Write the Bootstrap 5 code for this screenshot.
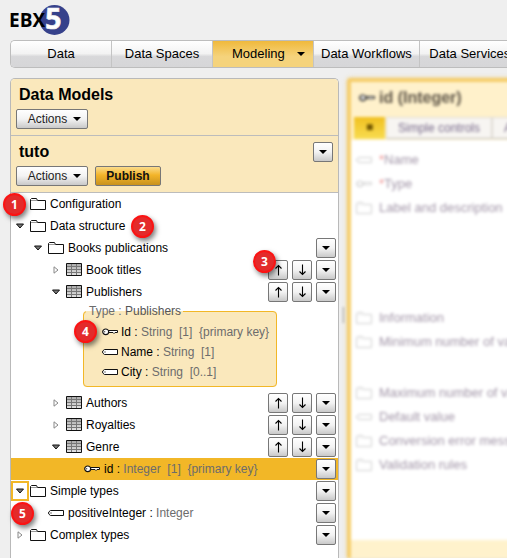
<!DOCTYPE html>
<html lang="en">
<head>
<meta charset="utf-8">
<meta name="viewport" content="width=device-width, initial-scale=1">
<title>EBX5 - Data Models</title>
<link href="https://cdn.jsdelivr.net/npm/bootstrap@5.3.0/dist/css/bootstrap.min.css" rel="stylesheet">
<style>
body{background:#efefef;font-family:"Liberation Sans",Arial,sans-serif;font-size:12px;line-height:16px;color:#000;overflow:hidden}
a{color:inherit;text-decoration:none}
svg{display:block;flex:none}
.brandbar{height:40px;padding:4px 0 0 10px}
.tabbar{margin-left:10px;border:1px solid #bdbdbd;border-right:0;border-radius:5px 0 0 5px;overflow:hidden;font-size:13px;height:28px}
.tabbar a{flex:none;min-width:101px;padding:0 7px;border-right:1px solid #c4c4c4;background:linear-gradient(#fff,#f3f3f3 48%,#d8d8da 60%,#d6d6d8);color:#000}
.tabbar a.current{background:linear-gradient(#f0b93c,#f5d37c 60%);padding-left:19px;gap:12px}
.workarea{margin-top:10px;padding-left:10px;min-height:480px;height:calc(100vh - 78px)}
.models{flex:0 0 329px;border:1px solid #b9b9b9;border-bottom:0;border-radius:5px 5px 0 0;background:#fff}
.pane-head{background:#fae8bc;border-bottom:1px solid #bcbcbc;padding:6px 5px;height:57px}
.pane-head:first-child{border-radius:4px 4px 0 0}
.pane-head h1,.pane-head h2{font-size:16px;line-height:20px;font-weight:700;margin:0 0 4px;padding-left:3px}
.tool{height:20px;border:1px solid #777;border-radius:2px;background:linear-gradient(#fff,#f3f3f3 50%,#c9c9c9);padding:0;color:#222;line-height:18px;font-size:12px;display:flex;align-items:center;justify-content:center}
.tool.sq{width:20px}
.tool.menu{width:72px;gap:6px;padding-left:5px}
.tool.go{width:66px;font-weight:700;background:linear-gradient(#fbdc8c,#f3b429 45%,#c8921e);color:#111;margin-left:7px}
.node{height:22px;padding-right:2px}
.twist{width:16px;height:18px;border:0;background:none;padding:0;display:flex;align-items:center;justify-content:center;margin:0 2px 0 1px}
.twist.focused{outline:2px solid #f2b727;outline-offset:-1px}
.lv0{padding-left:0}.lv1{padding-left:18px}.lv2{padding-left:36px}.lv3{padding-left:54px}
.leaf-icon{margin-left:19px}
.node .caption-text,.field-row .caption-text{margin-left:4px;white-space:pre}
.field-row .caption-text{margin-left:3px}
.dim{color:#6c6c6c}
.chosen{background:#f2b727}
.typebox{margin:0 0 5px 72px;width:194px;border:1px solid #f2b727;border-radius:4px;background:#fae8bc;padding:3px 0 4px 18px;min-width:0}
.typebox legend{float:none;width:auto;font-size:12px;line-height:16px;margin:0 0 0 -16px;padding:0 2px 0 3px;color:#555}
.field-row{height:20px}
.callout-dot{position:absolute;width:23px;height:23px;border-radius:50%;background:#e32b2b;border:2px solid #fb1313;color:#fff;font:bold 12px/19px "Open Sans",sans-serif;text-align:center;box-shadow:2px 3px 5px rgba(0,0,0,.5)}
.d1{left:-8px;top:114px}.d2{left:120px;top:136px}.d3{left:242px;top:171px}.d4{left:63px;top:241px}.d5{left:0;top:423px}
.grip{width:4px;height:16px;background:#cfcfcf;margin-top:229px;margin-left:3px;filter:blur(1px)}
.detail{border:4px solid #f5cd6a;border-right:0;border-bottom:0;border-radius:4px 0 0;background:#fff;filter:blur(1.4px);margin-left:2px;margin-right:-8px;overflow:hidden;font-size:13px;white-space:nowrap;box-shadow:0 0 4px #ead39a}
.detail-head{background:#fff1cb;height:58px;padding-top:5px}
.detail-head h2{font-size:16px;line-height:22px;font-weight:700;color:#5c5346;margin:0;padding-left:8px;gap:4px}
.detail-tabs{margin:8px 0 0 3px;height:22px;font-size:12px;color:#77698a}
.detail-tabs a{flex:none;background:#f7f5f2;border:1px solid #dedad3;border-bottom-color:#bbb;padding:0 11px;line-height:20px}
.detail-tabs a.on{background:linear-gradient(#f0c020,#f8dc50);width:31px;color:#705500;padding:0;text-align:center;border:0;margin-right:1px}
.prop{height:24px;gap:7px;padding-left:5px;color:#a296a8}
.prop svg{opacity:.2}
.prop b{color:#ee8a8a;font-weight:400}
.props{padding-top:8px}
.sp-l{margin-top:86px}.sp-m{margin-top:27px}
.detail-foot{background:#fff2cc;height:18px}
</style>
<script src="https://cdn.jsdelivr.net/npm/bootstrap@5.3.0/dist/js/bootstrap.bundle.min.js"></script>
</head>
<body>
<svg width="0" height="0" class="position-absolute" aria-hidden="true">
<defs>
<linearGradient id="tg" x1="0" y1="0" x2="0" y2="1"><stop offset="0" stop-color="#aaa"/><stop offset="1" stop-color="#e4e4e4"/></linearGradient>
<symbol id="folder" viewBox="0 0 16 14"><path d="M.5 12.500V2.500L1.500 1.500H6.500L7.500 3.500H15.500V12.500Z" fill="#fff" stroke="#111"/><path d="M1 3.500H7" stroke="#999"/></symbol>
<symbol id="grid" viewBox="0 0 16 14"><path d="M.5.5H15.500V12.500H.5Z" fill="url(#tg)" stroke="#111"/><path d="M1 3.500H15M1 6.500H15M1 9.500H15M5.500 1V12M10.500 1V12" stroke="#777" fill="none"/></symbol>
<symbol id="key" viewBox="0 0 16 8"><path d="M6 2.500H15.500V4.500H13L12 5.500L11 4.500H6" fill="#fff" stroke="#111"/><ellipse cx="3.700" cy="3.800" rx="3" ry="2.800" fill="#fff" stroke="#111" stroke-width="1.200"/><circle cx="2.600" cy="3.800" r=".8" fill="#555"/></symbol>
<symbol id="tag" viewBox="0 0 16 8"><path d="M2.500 1.500H15.500V6.500H2.500L.7 5V3Z" fill="#fff" stroke="#111"/><circle cx="3" cy="4" r=".8" fill="#666"/></symbol>
<symbol id="caret" viewBox="0 0 8 4"><path d="M0 0H8L4 4Z" fill="#000"/></symbol>
<symbol id="open" viewBox="0 0 8 6"><path d="M.5 1H7.500L4 5Z" fill="#777" stroke="#111"/></symbol>
<symbol id="shut" viewBox="0 0 6 8"><path d="M1 .8V7.200L5 4Z" fill="#fff" stroke="#888"/></symbol>
<symbol id="up" viewBox="0 0 9 12"><path d="M4.500 11.500V1.500M1.500 4.500L4.500 1.500L7.500 4.500" fill="none" stroke="#000" stroke-width="1.100"/></symbol>
<symbol id="down" viewBox="0 0 9 12"><path d="M4.500 .5V10.500M1.500 7.500L4.500 10.500L7.500 7.500" fill="none" stroke="#000" stroke-width="1.100"/></symbol>
</defs>
</svg>

<header class="brandbar">
<svg width="62" height="33" viewBox="0 0 62 33" role="img" aria-label="EBX5"><circle cx="44.500" cy="16" r="15" fill="#36418b"/><text x="-1" y="23" font-family="Open Sans, sans-serif" font-weight="700" font-size="19" fill="#000">EBX</text><text x="35" y="25" font-family="Open Sans, sans-serif" font-weight="700" font-size="29" fill="#fff" stroke="#efefef" stroke-width=".6">5</text></svg>
</header>

<nav class="tabbar d-flex" aria-label="Main">
<a class="d-flex align-items-center justify-content-center" href="#">Data</a>
<a class="d-flex align-items-center justify-content-center" href="#">Data Spaces</a>
<a class="current d-flex align-items-center" href="#">Modeling<svg width="8" height="4"><use href="#caret"/></svg></a>
<a class="d-flex align-items-center justify-content-center" href="#">Data Workflows</a>
<a class="d-flex align-items-center justify-content-center" href="#">Data Services</a>
</nav>

<div class="workarea d-flex">
<main class="models position-relative">
<section class="pane-head">
<h1>Data Models</h1>
<button class="tool menu" type="button">Actions<svg width="8" height="4"><use href="#caret"/></svg></button>
</section>
<section class="pane-head">
<div class="d-flex justify-content-between"><h2>tuto</h2><div style="height:0"><button class="tool sq" type="button" aria-label="tuto menu"><svg width="8" height="4"><use href="#caret"/></svg></button></div></div>
<div class="d-flex"><button class="tool menu" type="button">Actions<svg width="8" height="4"><use href="#caret"/></svg></button><button class="tool go" type="button">Publish</button></div>
</section>

<div class="tree">
<div class="node lv0 d-flex align-items-center"><button class="twist" type="button" aria-label="Expand"><svg width="6" height="8"><use href="#shut"/></svg></button><svg width="16" height="14"><use href="#folder"/></svg><span class="caption-text">Configuration</span></div>
<div class="node lv0 d-flex align-items-center"><button class="twist" type="button" aria-label="Collapse"><svg width="8" height="6"><use href="#open"/></svg></button><svg width="16" height="14"><use href="#folder"/></svg><span class="caption-text">Data structure</span></div>
<div class="node lv1 d-flex align-items-center"><button class="twist" type="button" aria-label="Collapse"><svg width="8" height="6"><use href="#open"/></svg></button><svg width="16" height="14"><use href="#folder"/></svg><span class="caption-text">Books publications</span><div class="d-flex gap-1 ms-auto"><button class="tool sq" type="button" aria-label="Menu"><svg width="8" height="4"><use href="#caret"/></svg></button></div></div>
<div class="node lv2 d-flex align-items-center"><button class="twist" type="button" aria-label="Expand"><svg width="6" height="8"><use href="#shut"/></svg></button><svg width="16" height="14"><use href="#grid"/></svg><span class="caption-text">Book titles</span><div class="d-flex gap-1 ms-auto"><button class="tool sq" type="button" aria-label="Move up"><svg width="9" height="12"><use href="#up"/></svg></button><button class="tool sq" type="button" aria-label="Move down"><svg width="9" height="12"><use href="#down"/></svg></button><button class="tool sq" type="button" aria-label="Menu"><svg width="8" height="4"><use href="#caret"/></svg></button></div></div>
<div class="node lv2 d-flex align-items-center"><button class="twist" type="button" aria-label="Collapse"><svg width="8" height="6"><use href="#open"/></svg></button><svg width="16" height="14"><use href="#grid"/></svg><span class="caption-text">Publishers</span><div class="d-flex gap-1 ms-auto"><button class="tool sq" type="button" aria-label="Move up"><svg width="9" height="12"><use href="#up"/></svg></button><button class="tool sq" type="button" aria-label="Move down"><svg width="9" height="12"><use href="#down"/></svg></button><button class="tool sq" type="button" aria-label="Menu"><svg width="8" height="4"><use href="#caret"/></svg></button></div></div>
<fieldset class="typebox">
<legend><span class="dim">Type :</span> Publishers</legend>
<div class="field-row d-flex align-items-center"><svg width="16" height="8"><use href="#key"/></svg><span class="caption-text">Id : <span class="dim">String  [1]  {primary key}</span></span></div>
<div class="field-row d-flex align-items-center"><svg width="16" height="8"><use href="#tag"/></svg><span class="caption-text">Name : <span class="dim">String  [1]</span></span></div>
<div class="field-row d-flex align-items-center"><svg width="16" height="8"><use href="#tag"/></svg><span class="caption-text">City : <span class="dim">String  [0..1]</span></span></div>
</fieldset>
<div class="node lv2 d-flex align-items-center"><button class="twist" type="button" aria-label="Expand"><svg width="6" height="8"><use href="#shut"/></svg></button><svg width="16" height="14"><use href="#grid"/></svg><span class="caption-text">Authors</span><div class="d-flex gap-1 ms-auto"><button class="tool sq" type="button" aria-label="Move up"><svg width="9" height="12"><use href="#up"/></svg></button><button class="tool sq" type="button" aria-label="Move down"><svg width="9" height="12"><use href="#down"/></svg></button><button class="tool sq" type="button" aria-label="Menu"><svg width="8" height="4"><use href="#caret"/></svg></button></div></div>
<div class="node lv2 d-flex align-items-center"><button class="twist" type="button" aria-label="Expand"><svg width="6" height="8"><use href="#shut"/></svg></button><svg width="16" height="14"><use href="#grid"/></svg><span class="caption-text">Royalties</span><div class="d-flex gap-1 ms-auto"><button class="tool sq" type="button" aria-label="Move up"><svg width="9" height="12"><use href="#up"/></svg></button><button class="tool sq" type="button" aria-label="Move down"><svg width="9" height="12"><use href="#down"/></svg></button><button class="tool sq" type="button" aria-label="Menu"><svg width="8" height="4"><use href="#caret"/></svg></button></div></div>
<div class="node lv2 d-flex align-items-center"><button class="twist" type="button" aria-label="Collapse"><svg width="8" height="6"><use href="#open"/></svg></button><svg width="16" height="14"><use href="#grid"/></svg><span class="caption-text">Genre</span><div class="d-flex gap-1 ms-auto"><button class="tool sq" type="button" aria-label="Move up"><svg width="9" height="12"><use href="#up"/></svg></button><button class="tool sq" type="button" aria-label="Move down"><svg width="9" height="12"><use href="#down"/></svg></button><button class="tool sq" type="button" aria-label="Menu"><svg width="8" height="4"><use href="#caret"/></svg></button></div></div>
<div class="node lv3 chosen d-flex align-items-center"><svg class="leaf-icon" width="16" height="8"><use href="#key"/></svg><span class="caption-text">id : <span class="dim">Integer  [1]  {primary key}</span></span><div class="d-flex gap-1 ms-auto"><button class="tool sq" type="button" aria-label="Menu"><svg width="8" height="4"><use href="#caret"/></svg></button></div></div>
<div class="node lv0 d-flex align-items-center"><button class="twist focused" type="button" aria-label="Collapse"><svg width="8" height="6"><use href="#open"/></svg></button><svg width="16" height="14"><use href="#folder"/></svg><span class="caption-text">Simple types</span><div class="d-flex gap-1 ms-auto"><button class="tool sq" type="button" aria-label="Menu"><svg width="8" height="4"><use href="#caret"/></svg></button></div></div>
<div class="node lv1 d-flex align-items-center"><svg class="leaf-icon" width="16" height="8"><use href="#tag"/></svg><span class="caption-text">positiveInteger : <span class="dim">Integer</span></span><div class="d-flex gap-1 ms-auto"><button class="tool sq" type="button" aria-label="Menu"><svg width="8" height="4"><use href="#caret"/></svg></button></div></div>
<div class="node lv0 d-flex align-items-center"><button class="twist" type="button" aria-label="Expand"><svg width="6" height="8"><use href="#shut"/></svg></button><svg width="16" height="14"><use href="#folder"/></svg><span class="caption-text">Complex types</span><div class="d-flex gap-1 ms-auto"><button class="tool sq" type="button" aria-label="Menu"><svg width="8" height="4"><use href="#caret"/></svg></button></div></div>
</div>

<span class="callout-dot d1">1</span>
<span class="callout-dot d2">2</span>
<span class="callout-dot d3">3</span>
<span class="callout-dot d4">4</span>
<span class="callout-dot d5">5</span>
</main>

<div class="grip"></div>
<aside class="detail flex-grow-1 d-flex flex-column">
<div class="detail-head">
<h2 class="d-flex align-items-center"><svg width="16" height="8"><use href="#key"/></svg>id (Integer)</h2>
<div class="detail-tabs d-flex"><a class="on" href="#" aria-label="Main">■</a><a href="#">Simple controls</a><a href="#">Advanced</a></div>
</div>
<div class="props flex-grow-1">
<div class="prop d-flex align-items-center"><svg width="16" height="8"><use href="#tag"/></svg><span><b>*</b>Name</span></div>
<div class="prop d-flex align-items-center"><svg width="16" height="8"><use href="#key"/></svg><span><b>*</b>Type</span></div>
<div class="prop d-flex align-items-center"><svg width="16" height="14"><use href="#folder"/></svg>Label and description</div>
<div class="prop sp-l d-flex align-items-center"><svg width="16" height="14"><use href="#folder"/></svg>Information</div>
<div class="prop d-flex align-items-center"><svg width="16" height="14"><use href="#folder"/></svg>Minimum number of values</div>
<div class="prop sp-m d-flex align-items-center"><svg width="16" height="14"><use href="#folder"/></svg>Maximum number of values</div>
<div class="prop d-flex align-items-center"><svg width="16" height="8"><use href="#tag"/></svg>Default value</div>
<div class="prop d-flex align-items-center"><svg width="16" height="14"><use href="#folder"/></svg>Conversion error message</div>
<div class="prop d-flex align-items-center"><svg width="16" height="14"><use href="#folder"/></svg>Validation rules</div>
</div>
<div class="detail-foot"></div>
</aside>
</div>
</body>
</html>
